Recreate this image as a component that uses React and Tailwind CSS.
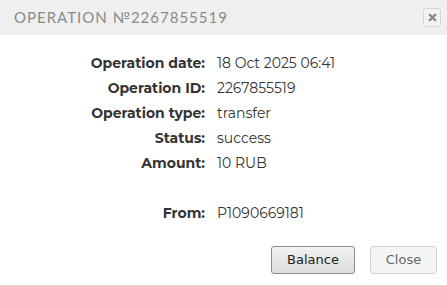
export default function App() {
  const rows = [
    ['Operation date:', '18 Oct 2025 06:41'],
    ['Operation ID:', '2267855519'],
    ['Operation type:', 'transfer'],
    ['Status:', 'success'],
    ['Amount:', '10 RUB'],
  ];

  return (
    <div className="w-[447px] h-[286px] bg-white flex flex-col" style={{ fontFamily: 'Montserrat, "Open Sans", sans-serif' }}>
      {/* header */}
      <div className="h-[35px] bg-[#efefef] flex items-center justify-between pl-[14px] pr-[6px]">
        <span className="text-[15px] tracking-[1px] text-[#8a8a8a] font-[Lato,sans-serif]">
          OPERATION №2267855519
        </span>
        <button className="w-[18px] h-[19px] rounded-[3px] border border-[#d6d6d6] bg-[#f2f2f2] flex items-center justify-center">
          <svg width="9" height="9" viewBox="0 0 10 10">
            <path d="M2 2 L8 8 M8 2 L2 8" stroke="#888" strokeWidth="2.6" strokeLinecap="round" />
          </svg>
        </button>
      </div>

      {/* details */}
      <div className="pt-[16px] text-[14px]">
        {rows.map(([k, v]) => (
          <div key={k} className="flex h-[25px] items-center">
            <span className="w-[205px] text-right font-bold text-[#333]">{k}</span>
            <span className="ml-[12px] text-[#333]">{v}</span>
          </div>
        ))}
        <div className="h-[25px]" />
        <div className="flex h-[25px] items-center">
          <span className="w-[205px] text-right font-bold text-[#333]">From:</span>
          <span className="ml-[12px] text-[#333]">P1090669181</span>
        </div>
      </div>

      {/* footer */}
      <div className="flex-1 flex items-start justify-end gap-[15px] pr-[10px] pt-[20px] border-b border-[#dcdcdc] font-['DejaVu_Sans',sans-serif] text-[13px]">
        <button className="w-[84px] h-[28px] rounded-[3px] border border-[#8e8e8e] bg-gradient-to-b from-[#f2f2f2] to-[#dcdcdc] text-[#222]">
          Balance
        </button>
        <button className="w-[67px] h-[28px] rounded-[3px] border border-[#d3d3d3] bg-[#f5f5f5] text-[#666]">
          Close
        </button>
      </div>
    </div>
  );
}
